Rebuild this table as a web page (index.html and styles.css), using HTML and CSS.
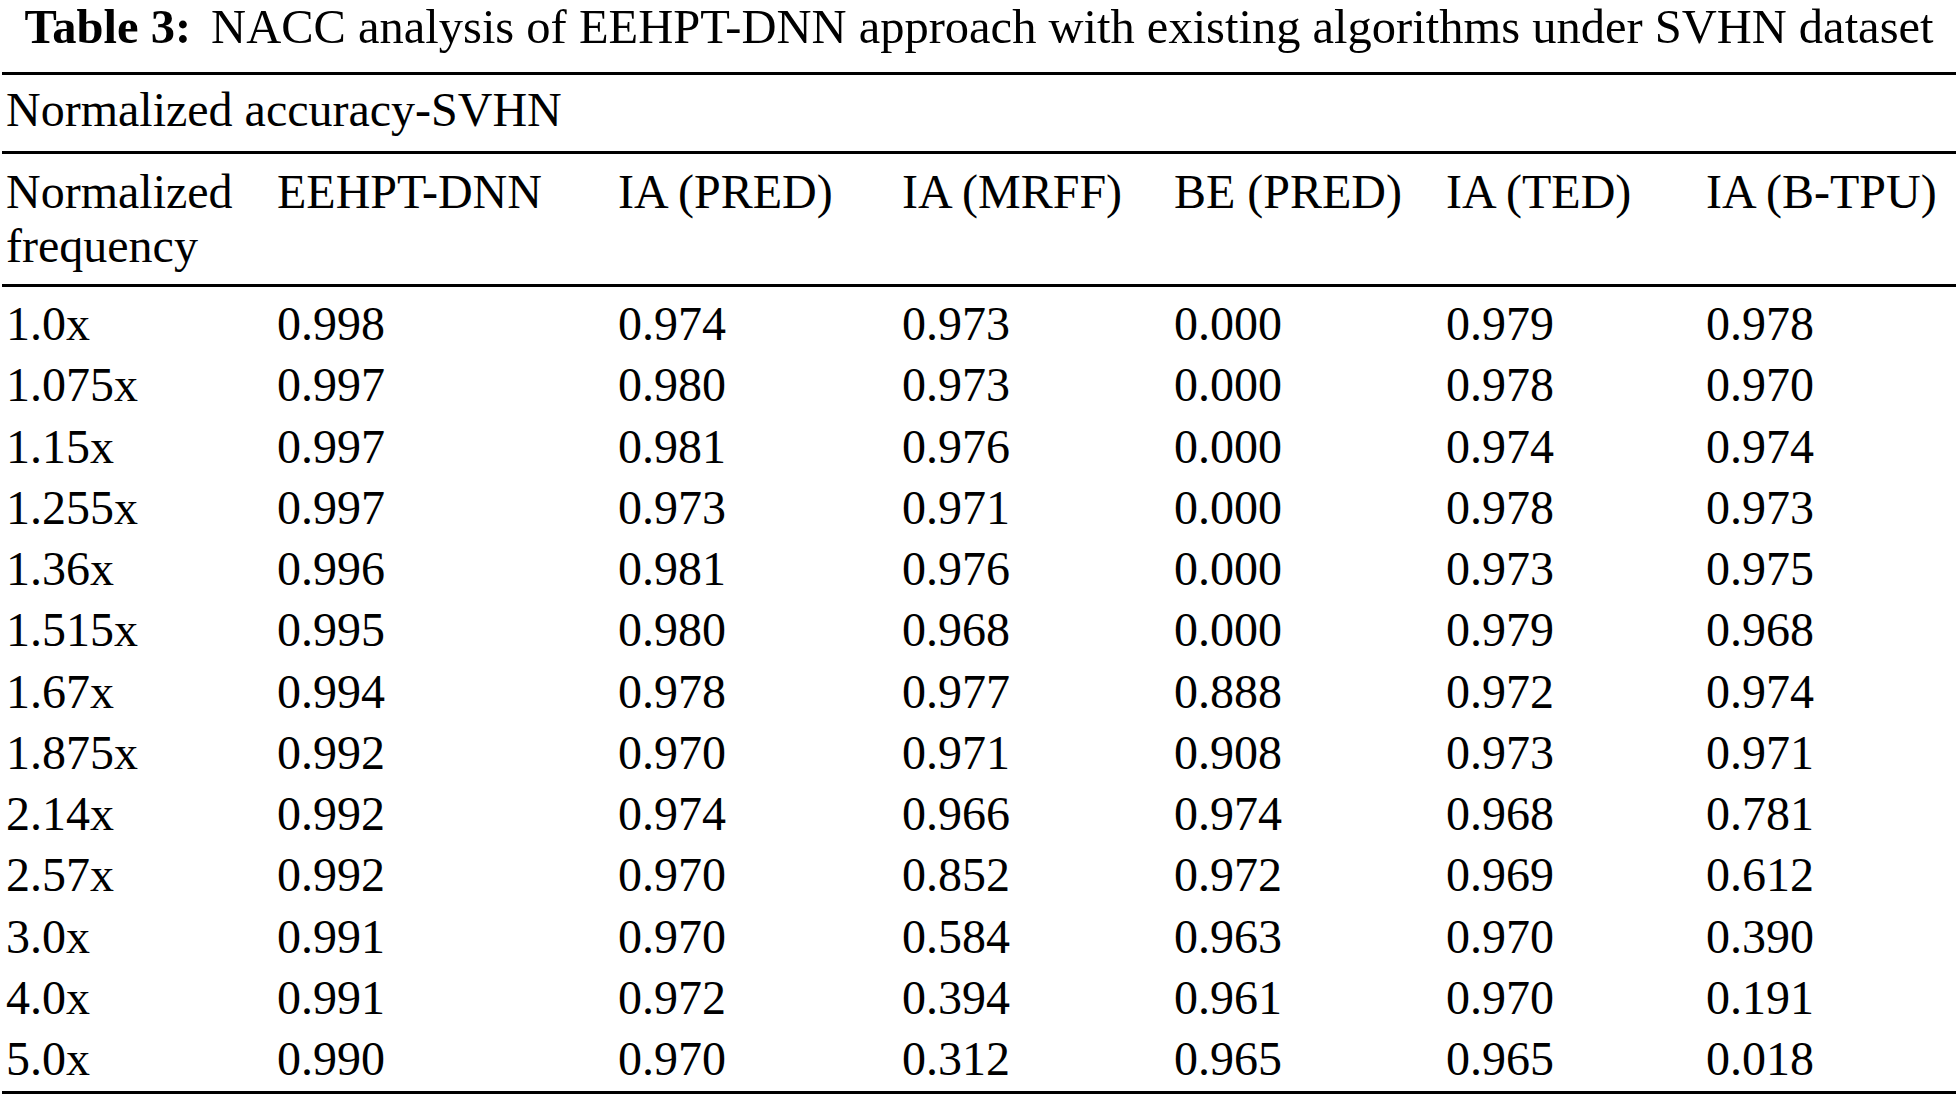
FILE: index.html
```html
<!DOCTYPE html>
<html>
<head>
<meta charset="utf-8">
<link rel="stylesheet" href="styles.css">
</head>
<body>
<div class="page">
  <div class="caption"><span class="label">Table 3:</span><span class="cap-text">NACC analysis of EEHPT-DNN approach with existing algorithms under SVHN dataset</span></div>
  <table class="data">
    <colgroup>
      <col class="c1"><col class="c2"><col class="c3"><col class="c4"><col class="c5"><col class="c6"><col class="c7">
    </colgroup>
    <thead>
      <tr class="section"><th colspan="7">Normalized accuracy-SVHN</th></tr>
      <tr class="head">
        <th>Normalized<br>frequency</th>
        <th>EEHPT-DNN</th>
        <th>IA (PRED)</th>
        <th>IA (MRFF)</th>
        <th>BE (PRED)</th>
        <th>IA (TED)</th>
        <th>IA (B-TPU)</th>
      </tr>
    </thead>
    <tbody>
      <tr class="first"><td>1.0x</td><td>0.998</td><td>0.974</td><td>0.973</td><td>0.000</td><td>0.979</td><td>0.978</td></tr>
      <tr><td>1.075x</td><td>0.997</td><td>0.980</td><td>0.973</td><td>0.000</td><td>0.978</td><td>0.970</td></tr>
      <tr><td>1.15x</td><td>0.997</td><td>0.981</td><td>0.976</td><td>0.000</td><td>0.974</td><td>0.974</td></tr>
      <tr><td>1.255x</td><td>0.997</td><td>0.973</td><td>0.971</td><td>0.000</td><td>0.978</td><td>0.973</td></tr>
      <tr><td>1.36x</td><td>0.996</td><td>0.981</td><td>0.976</td><td>0.000</td><td>0.973</td><td>0.975</td></tr>
      <tr><td>1.515x</td><td>0.995</td><td>0.980</td><td>0.968</td><td>0.000</td><td>0.979</td><td>0.968</td></tr>
      <tr><td>1.67x</td><td>0.994</td><td>0.978</td><td>0.977</td><td>0.888</td><td>0.972</td><td>0.974</td></tr>
      <tr><td>1.875x</td><td>0.992</td><td>0.970</td><td>0.971</td><td>0.908</td><td>0.973</td><td>0.971</td></tr>
      <tr><td>2.14x</td><td>0.992</td><td>0.974</td><td>0.966</td><td>0.974</td><td>0.968</td><td>0.781</td></tr>
      <tr><td>2.57x</td><td>0.992</td><td>0.970</td><td>0.852</td><td>0.972</td><td>0.969</td><td>0.612</td></tr>
      <tr><td>3.0x</td><td>0.991</td><td>0.970</td><td>0.584</td><td>0.963</td><td>0.970</td><td>0.390</td></tr>
      <tr><td>4.0x</td><td>0.991</td><td>0.972</td><td>0.394</td><td>0.961</td><td>0.970</td><td>0.191</td></tr>
      <tr class="last"><td>5.0x</td><td>0.990</td><td>0.970</td><td>0.312</td><td>0.965</td><td>0.965</td><td>0.018</td></tr>
    </tbody>
  </table>
</div>
</body>
</html>
```

FILE: styles.css
```css
html, body {
  margin: 0;
  padding: 0;
  background: #ffffff;
}

.page {
  width: 1958px;
  height: 1100px;
  overflow: hidden;
  font-family: "Liberation Serif", "Times New Roman", serif;
  color: #000;
  font-size: 48px;
}

.caption {
  text-align: center;
  font-size: 48.5px;
  line-height: 54px;
  height: 54px;
  white-space: nowrap;
}

.label {
  font-weight: bold;
  margin-right: 20px;
}

.data {
  border-collapse: collapse;
  table-layout: fixed;
  width: 1954px;
  margin-left: 2px;
  margin-top: 18px;
}

.c1 { width: 271px; }
.c2 { width: 341px; }
.c3 { width: 284px; }
.c4 { width: 272px; }
.c5 { width: 272px; }
.c6 { width: 260px; }
.c7 { width: 254px; }

.data th,
.data td {
  text-align: left;
  font-weight: normal;
  padding: 0 0 0 4px;
  white-space: nowrap;
  vertical-align: top;
}

.section th {
  border-top: 3px solid #000;
  border-bottom: 3px solid #000;
  line-height: 54px;
  padding-top: 8px;
  padding-bottom: 14px;
}

.head th {
  line-height: 54px;
  padding-top: 11px;
  padding-bottom: 11px;
  border-bottom: 3px solid #000;
}

.data td {
  line-height: 61.25px;
}

.first td {
  padding-top: 6px;
}

.last td {
  padding-bottom: 2px;
  border-bottom: 3px solid #000;
}
```
